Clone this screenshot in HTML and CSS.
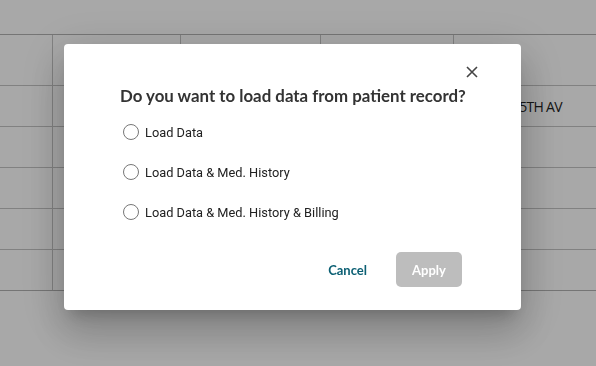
FILE: index.html
```html
<!DOCTYPE html>
<html>
<head>
<meta charset="utf-8">
<link rel="stylesheet" href="styles.css">
</head>
<body>
<div class="page">
  <div class="topbar"></div>
  <table class="grid">
    <tr class="head"><td class="c1"></td><td class="c2"></td><td class="c3"></td><td class="c4"></td><td class="c5"></td></tr>
    <tr><td></td><td></td><td></td><td></td><td class="addr">1100 5TH AV</td></tr>
    <tr><td></td><td></td><td></td><td></td><td></td></tr>
    <tr><td></td><td></td><td></td><td></td><td></td></tr>
    <tr><td></td><td></td><td></td><td></td><td></td></tr>
    <tr><td></td><td></td><td></td><td></td><td></td></tr>
  </table>
</div>
<div class="overlay">
  <div class="dialog">
    <div class="close-row">
      <button class="close" aria-label="Close">
        <svg width="12" height="12" viewBox="0 0 12 12"><path d="M1 1L11 11M11 1L1 11" stroke="#444" stroke-width="1.6" fill="none"/></svg>
      </button>
    </div>
    <h2 class="title">Do you want to load data from patient record?</h2>
    <div class="options">
      <label class="opt"><span class="radio"></span><span>Load Data</span></label>
      <label class="opt"><span class="radio"></span><span>Load Data &amp; Med. History</span></label>
      <label class="opt"><span class="radio"></span><span>Load Data &amp; Med. History &amp; Billing</span></label>
    </div>
    <div class="actions">
      <button class="cancel">Cancel</button>
      <button class="apply">Apply</button>
    </div>
  </div>
</div>
</body>
</html>
```
FILE: styles.css
```css
html, body { margin: 0; padding: 0; }
body { width: 596px; height: 366px; overflow: hidden; background: #fff; font-family: Roboto, "Liberation Sans", sans-serif; }
.page { width: 596px; }
.topbar { height: 34px; border-bottom: 1px solid #b2b2b2; }
.grid { border-collapse: collapse; width: 100%; table-layout: fixed; }
.grid td { border-right: 1px solid #c4c4c4; border-bottom: 1px solid #c4c4c4; height: 40px; padding: 0; font-family: "Open Sans", sans-serif; font-size: 14px; color: #222; white-space: nowrap; overflow: hidden; }
.grid td:last-child { border-right: none; }
.grid tr.head td { height: 50px; }
.grid tr:last-child td { border-bottom: 1px solid #b2b2b2; }
.c1 { width: 52px; }
.c2 { width: 127px; }
.c3 { width: 139px; }
.c4 { width: 132px; }
.addr { padding-left: 33px !important; letter-spacing: -0.7px; }

.overlay { position: fixed; inset: 0; background: rgba(0,0,0,0.34); display: flex; align-items: flex-start; padding: 44px 0 0 64px; }
.dialog { width: 457px; height: 266px; box-sizing: border-box; background: #fff; border-radius: 4px; padding: 21px 59px 0 56px; display: flex; flex-direction: column;
  box-shadow: 0 11px 15px -7px rgba(0,0,0,.2), 0 24px 38px 3px rgba(0,0,0,.14), 0 9px 46px 8px rgba(0,0,0,.12); }
.close-row { display: flex; justify-content: flex-end; height: 15px; margin-right: -17px; }
.close { border: none; background: none; padding: 0; width: 14px; height: 14px; display: flex; align-items: center; justify-content: center; }
.title { margin: 5px 0 0; font-family: Lato, sans-serif; font-weight: 700; font-size: 16.85px; color: #333; line-height: 22px; white-space: nowrap; }
.options { display: flex; flex-direction: column; gap: 18px; margin-top: 14px; }
.opt { display: flex; align-items: center; gap: 6px; font-family: Roboto, sans-serif; font-size: 12.8px; color: #212121; height: 22px; margin-left: 3px; }
.radio { border: 1.5px solid #777; border-radius: 50%; box-sizing: border-box; width: 16px; height: 16px; }
.actions { display: flex; justify-content: flex-end; align-items: center; gap: 29px; margin-top: 29px; }
.cancel { border: none; background: none; padding: 0; font-family: Lato, sans-serif; font-weight: 700; font-size: 13px; color: #0b5f73; }
.apply { border: none; background: #bdbdbd; color: #fff; font-family: Lato, sans-serif; font-weight: 700; font-size: 13px; width: 66px; height: 35px; border-radius: 5px; }
```
